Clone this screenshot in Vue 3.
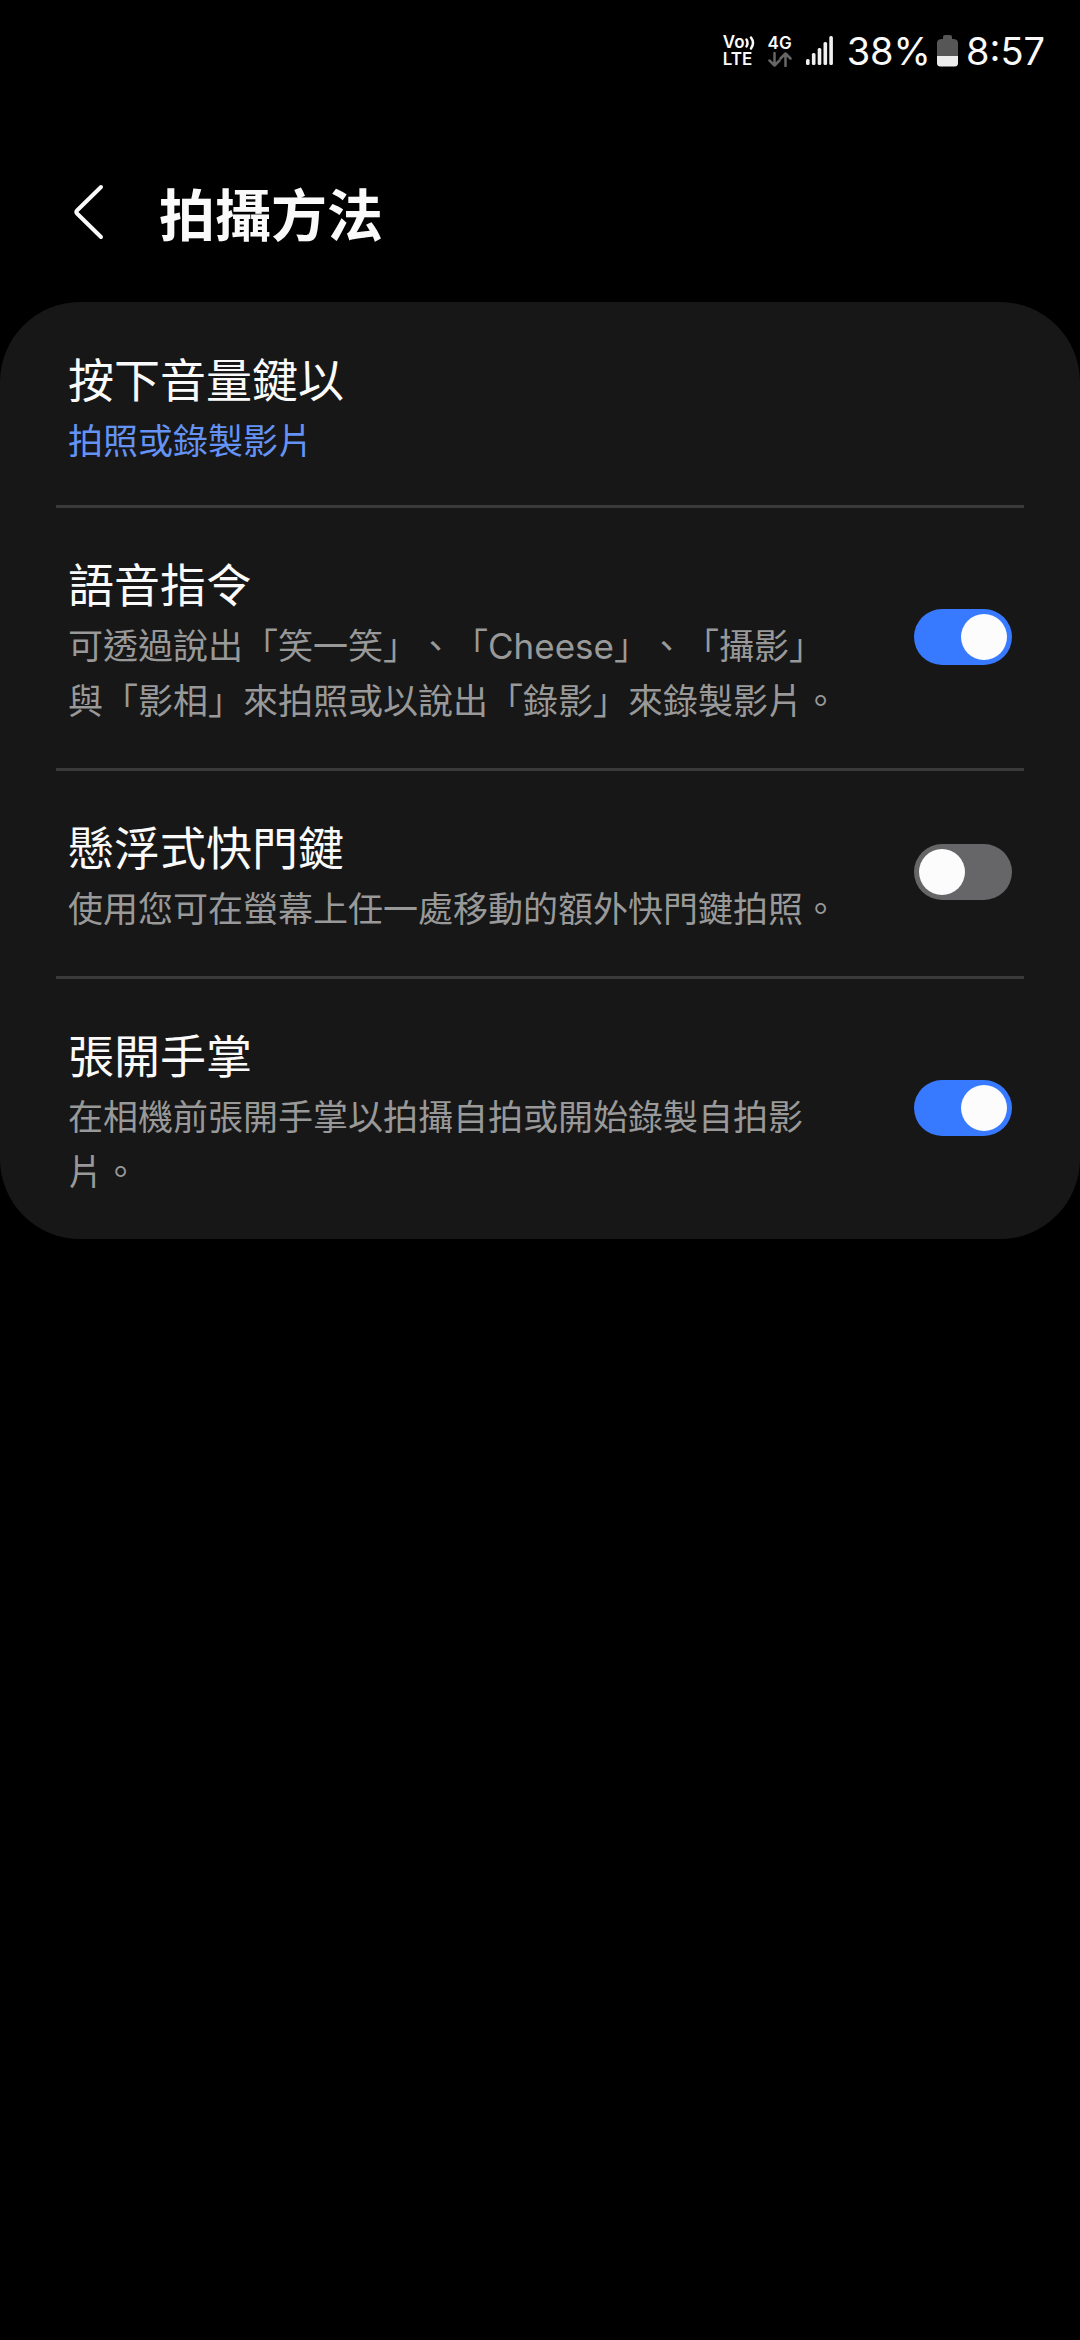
<script setup>
import { reactive } from 'vue'

const settings = reactive([
  {
    id: 'voice',
    title: '語音指令',
    text: '可透過說出「笑一笑」、「Cheese」、「攝影」與「影相」來拍照或以說出「錄影」來錄製影片。',
    on: true,
  },
  {
    id: 'floating',
    title: '懸浮式快門鍵',
    text: '使用您可在螢幕上任一處移動的額外快門鍵拍照。',
    on: false,
  },
  {
    id: 'palm',
    title: '張開手掌',
    text: '在相機前張開手掌以拍攝自拍或開始錄製自拍影片。',
    on: true,
  },
])
</script>

<template>
  <div class="screen" lang="zh-Hant">
    <div class="status">
      <div class="volte">
        <div class="vo">
          <span>Vo</span>
          <svg width="10" height="14" viewBox="0 0 10 14" aria-hidden="true">
            <path d="M1.5 3.5Q3.5 7 1.5 10.5M6 1.5Q10 7 6 12.5" />
          </svg>
        </div>
        <span>LTE</span>
      </div>
      <div class="network">
        <span>4G</span>
        <svg width="24" height="15" viewBox="0 0 24 15" aria-hidden="true">
          <path d="M6.5 1V13.5M1.5 8.5L6.5 13.5L11.5 8.5M17.5 14V1.5M12.5 6.5L17.5 1.5L22.5 6.5" />
        </svg>
      </div>
      <svg class="signal" width="27" height="30" viewBox="0 0 27 30" aria-hidden="true">
        <rect x="0" y="23" width="3.6" height="6" rx="1.5" />
        <rect x="5.9" y="17" width="3.6" height="12" rx="1.5" />
        <rect x="11.7" y="12" width="3.6" height="17" rx="1.5" />
        <rect x="17.5" y="6" width="3.6" height="23" rx="1.5" />
        <rect x="23.3" y="0" width="3.6" height="29" rx="1.5" />
      </svg>
      <span class="percent">38%</span>
      <svg class="battery" width="21" height="32" viewBox="0 0 21 32" aria-hidden="true">
        <path d="M6 2Q6 0 8 0H13Q15 0 15 2V4H17Q21 4.5 21 8V21H0V8Q0 4.5 4 4H6Z" fill="#565656" />
        <path d="M0 21H21V28Q21 31.5 17.5 31.5H3.5Q0 31.5 0 28Z" fill="#ececec" />
      </svg>
      <span class="clock">8:57</span>
    </div>

    <header class="header">
      <button class="back" type="button" aria-label="返回">
        <svg width="32" height="56" viewBox="0 0 32 56" aria-hidden="true">
          <path d="M29 3L5 26.500Q3.500 28 5 29.500L29 53" />
        </svg>
      </button>
      <h1>拍攝方法</h1>
    </header>

    <main class="card">
      <button class="row first" type="button">
        <span class="label">
          <span class="title">按下音量鍵以</span>
          <span class="text value">拍照或錄製影片</span>
        </span>
      </button>
      <label v-for="item in settings" :key="item.id" class="row" :for="item.id">
        <span class="label">
          <span class="title">{{ item.title }}</span>
          <span class="text">{{ item.text }}</span>
        </span>
        <input :id="item.id" v-model="item.on" class="switch" type="checkbox" role="switch" />
      </label>
    </main>
  </div>
</template>

<style>
body {
  background: #000;
}
</style>

<style scoped>
.screen {
  min-height: 100vh;
  background: #000;
  color: #fafafa;
  font-family: Inter, "Noto Sans CJK TC", sans-serif;
  text-spacing-trim: space-all;
}

.status {
  display: flex;
  align-items: center;
  justify-content: flex-end;
  height: 102px;
  padding-right: 35px;
  font-size: 38px;
}

.volte,
.network {
  display: flex;
  flex-direction: column;
  font-size: 17px;
  font-weight: 600;
  line-height: 17px;
}

.volte {
  margin-right: 13px;
}

.vo {
  display: flex;
  align-items: center;
}

.vo svg,
.network svg,
.back svg {
  fill: none;
  stroke: currentColor;
  stroke-linecap: round;
  stroke-linejoin: round;
  stroke-width: 2.5;
}

.network {
  align-items: center;
  margin-right: 14px;
}

.network svg {
  color: #666;
}

.signal {
  margin-right: 14px;
  fill: #f0f0f0;
}

.battery {
  margin: 0 8px 0 6px;
}

.header {
  display: flex;
  align-items: center;
  height: 200px;
  padding: 20px 72px 0;
  box-sizing: border-box;
}

.back {
  display: flex;
  margin: 0 55px 0 0;
  padding: 0;
  border: 0;
  background: none;
  color: #fafafa;
}

.back svg {
  stroke-width: 4;
}

h1 {
  margin: 0;
  padding-top: 8px;
  font-size: 56px;
  line-height: 80px;
  font-weight: 700;
}

.card {
  padding: 0 56px;
  border-radius: 80px;
  background: #171717;
}

.row {
  display: flex;
  align-items: center;
  justify-content: space-between;
  gap: 60px;
  width: 100%;
  box-sizing: border-box;
  margin: 0;
  padding: 0 12px;
  border: 0;
  background: none;
  box-shadow: inset 0 3px #3a3a3a;
  color: inherit;
  font: inherit;
  text-align: left;
}

.first {
  box-shadow: none;
}

.label {
  display: flex;
  flex-direction: column;
  padding: 47px 0 39px;
}

.first .label {
  padding: 45px 0 36px;
}

.title {
  font-size: 46px;
  line-height: 67px;
}

.text {
  color: #999;
  font-size: 35px;
  line-height: 55px;
}

.value {
  color: #6493f5;
}

.switch {
  flex: none;
  appearance: none;
  width: 98px;
  height: 56px;
  margin: 0;
  padding: 5px;
  box-sizing: border-box;
  border-radius: 28px;
  background: #666668;
}

.switch::before {
  content: "";
  display: block;
  width: 46px;
  height: 46px;
  border-radius: 50%;
  background: #fcfcfc;
}

.switch:checked {
  background: #387aff;
}

.switch:checked::before {
  margin-left: auto;
}
</style>
